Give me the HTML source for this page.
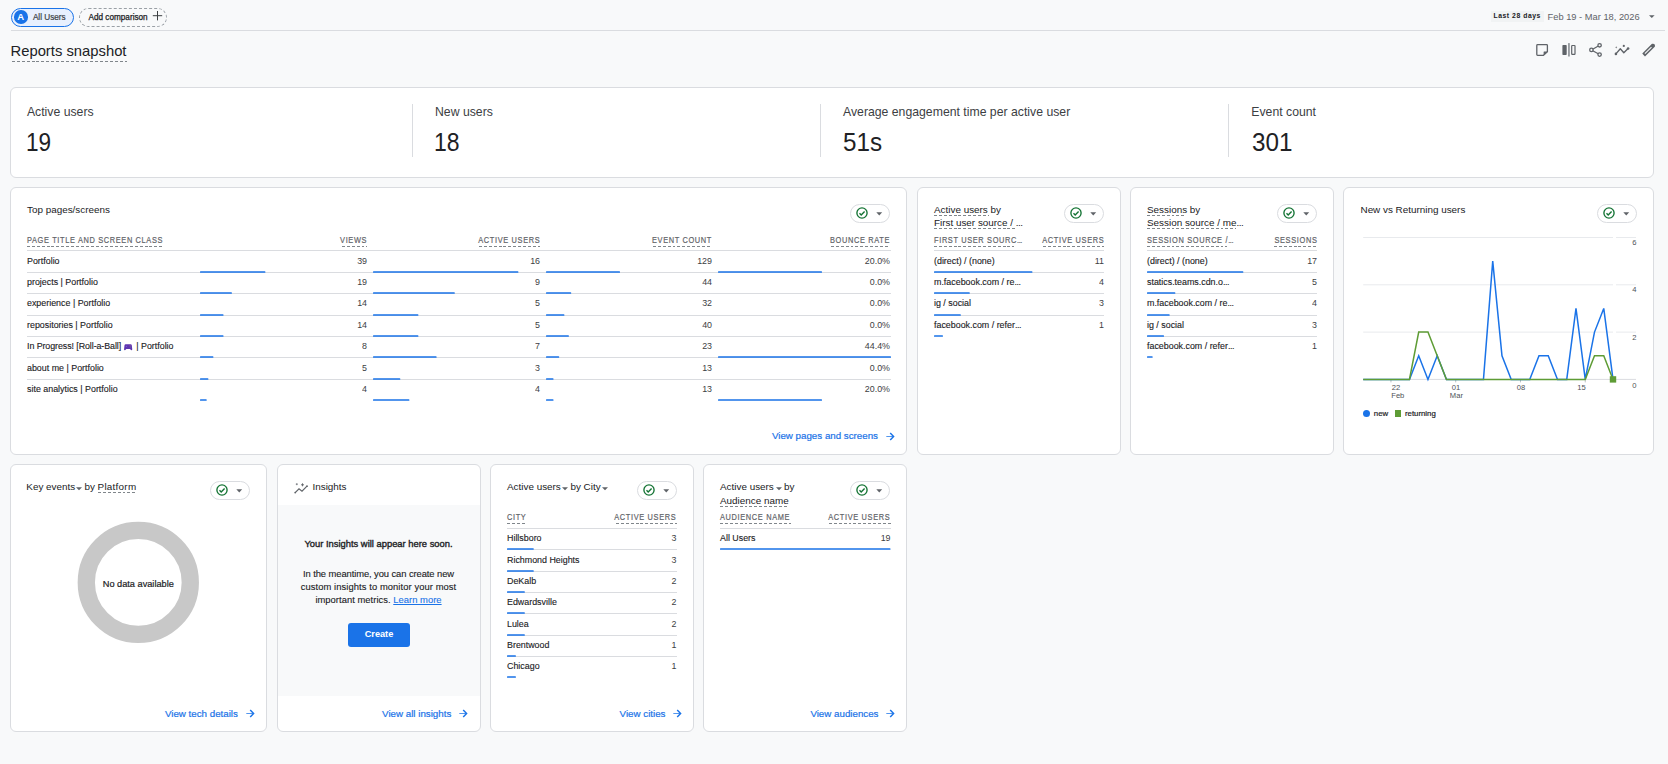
<!DOCTYPE html><html><head><meta charset="utf-8"><style>html,body{margin:0;padding:0;background:#f8f9fa;}body{width:1668px;height:764px;background:#f8f9fa;position:relative;overflow:hidden;font-family:"Liberation Sans", sans-serif;}.t{position:absolute;line-height:0;white-space:nowrap;}.r{position:absolute;}.s{position:absolute;overflow:visible;}.card{position:absolute;box-sizing:border-box;background:#fff;border:1px solid #dadce0;border-radius:6px;}.chip{position:absolute;border:1px solid #dadce0;border-radius:10px;}</style></head><body>
<div class="r" style="left:11px;top:8px;width:60.5px;height:16.5px;border:1px solid #1a73e8;border-radius:10px;background:#e8f0fe;"></div>
<div class="r" style="left:14px;top:10px;width:13.6px;height:13.6px;border-radius:50%;background:#1a73e8;"></div>
<div class="t" style="top:17.00px;font-size:9.5px;color:#fff;font-weight:700;left:20.80px;transform:translateX(-50%);">A</div>
<div class="t" style="top:18.00px;font-size:8.2px;color:#3c4043;left:32.90px;-webkit-text-stroke:0.2px #3c4043;">All Users</div>
<div class="r" style="left:79px;top:8px;width:85.5px;height:16.5px;border:1px dashed #9aa0a6;border-radius:10px;"></div>
<div class="t" style="top:18.00px;font-size:8.2px;color:#202124;left:88.50px;-webkit-text-stroke:0.25px #202124;">Add comparison</div>
<svg class="s" style="left:151.6px;top:9.6px" width="11" height="11" viewBox="0 0 11 11"><path d="M5.5 1 V10.4 M0.8 5.7 H10.2" stroke="#3c4043" stroke-width="1"/></svg>
<div class="r" style="left:11.00px;top:30.00px;width:1654.00px;height:1.00px;background:#dadce0;"></div>
<div class="r" style="left:1490.70px;top:10.70px;width:53.00px;height:11.30px;background:#f1f3f4;"></div>
<div class="t" style="top:16.00px;font-size:6.8px;color:#202124;font-weight:700;letter-spacing:0.55px;left:1493.50px;">Last 28 days</div>
<div class="t" style="top:17.00px;font-size:9.3px;color:#5f6368;left:1547.60px;">Feb 19 - Mar 18, 2026</div>
<svg class="s" style="left:1648.80px;top:15.30px" width="5.6" height="3.8" viewBox="0 0 5.6 3.8"><path d="M0 0.3 L5.6 0.3 L2.8 3.0999999999999996 Z" fill="#5f6368"/></svg>
<div class="t" style="top:51.00px;font-size:14.8px;color:#202124;left:10.50px;">Reports snapshot</div>
<div class="r" style="left:11.50px;top:61.00px;width:115.00px;height:1px;background:repeating-linear-gradient(90deg,#80868b 0 2.9px,transparent 2.9px 4.9px);"></div>
<svg class="s" style="left:1530px;top:40px" width="140" height="20" viewBox="1530 40 140 20"><path d="M1537.6 44.7 H1546.6 Q1547.4 44.7 1547.4 45.5 V51.6 L1543.4 55.4 H1537.6 Q1536.8 55.4 1536.8 54.6 V45.5 Q1536.8 44.7 1537.6 44.7 Z" fill="none" stroke="#5f6368" stroke-width="1.3"/><path d="M1547.6 51.5 H1544.2 Q1543.6 51.5 1543.6 52.1 V55.6 Z" fill="#5f6368"/><rect x="1562.4" y="45" width="4.3" height="9.9" rx="0.7" fill="#5f6368"/><rect x="1568.2" y="43.1" width="1.5" height="13.4" fill="#80868b"/><rect x="1571.7" y="45.5" width="3.3" height="8.9" rx="0.6" fill="none" stroke="#5f6368" stroke-width="1.2"/><path d="M1599.6 45.3 L1591.4 49.9 L1599.6 54.6" fill="none" stroke="#5f6368" stroke-width="1.2"/><circle cx="1599.6" cy="45.3" r="1.7" fill="#f8f9fa" stroke="#5f6368" stroke-width="1.3"/><circle cx="1591.4" cy="49.9" r="1.7" fill="#f8f9fa" stroke="#5f6368" stroke-width="1.3"/><circle cx="1599.6" cy="54.6" r="1.7" fill="#f8f9fa" stroke="#5f6368" stroke-width="1.3"/><path d="M1615.9 53.9 L1620.3 48.8 L1623.8 52.8 L1628.1 48.5" fill="none" stroke="#5f6368" stroke-width="1.35" stroke-linejoin="round"/><circle cx="1615.9" cy="53.9" r="1.3" fill="#5f6368"/><circle cx="1628.1" cy="48.5" r="1.3" fill="#5f6368"/><circle cx="1623.8" cy="45.9" r="1.1" fill="#5f6368"/><path d="M1616.2 46.2 L1616.6 47 L1617.4 47.3 L1616.6 47.6 L1616.2 48.4 L1615.8 47.6 L1615 47.3 L1615.8 47 Z" fill="#5f6368"/><path d="M1643.6 55 L1653.6 45" stroke="#5f6368" stroke-width="3.9" stroke-linecap="butt"/><path d="M1644.9 53.7 L1651.5 47.1" stroke="#f8f9fa" stroke-width="1.1"/><circle cx="1653.3" cy="45.3" r="1.6" fill="#5f6368"/></svg>
<div class="card" style="left:10px;top:87px;width:1644px;height:91px;"></div>
<div class="t" style="top:112.00px;font-size:12.25px;color:#3c4043;left:26.90px;">Active users</div>
<div class="t" style="top:142.00px;font-size:25.5px;color:#202124;left:26.10px;transform:scaleX(0.885);transform-origin:0 0;">19</div>
<div class="t" style="top:112.00px;font-size:12.25px;color:#3c4043;left:435.00px;">New users</div>
<div class="t" style="top:142.00px;font-size:25.5px;color:#202124;left:433.80px;transform:scaleX(0.9);transform-origin:0 0;">18</div>
<div class="t" style="top:112.00px;font-size:12.25px;color:#3c4043;left:843.00px;">Average engagement time per active user</div>
<div class="t" style="top:142.00px;font-size:25.5px;color:#202124;left:842.60px;transform:scaleX(0.95);transform-origin:0 0;">51s</div>
<div class="t" style="top:112.00px;font-size:12.25px;color:#3c4043;left:1251.30px;">Event count</div>
<div class="t" style="top:142.00px;font-size:25.5px;color:#202124;left:1251.50px;transform:scaleX(0.95);transform-origin:0 0;">301</div>
<div class="r" style="left:412.00px;top:104.00px;width:1.00px;height:53.00px;background:#dadce0;"></div>
<div class="r" style="left:820.00px;top:104.00px;width:1.00px;height:53.00px;background:#dadce0;"></div>
<div class="r" style="left:1228.00px;top:104.00px;width:1.00px;height:53.00px;background:#dadce0;"></div>
<div class="card" style="left:10px;top:187px;width:897px;height:268px;"></div>
<div class="card" style="left:917px;top:187px;width:204px;height:268px;"></div>
<div class="card" style="left:1130px;top:187px;width:204px;height:268px;"></div>
<div class="card" style="left:1343px;top:187px;width:311px;height:268px;"></div>
<div class="card" style="left:10px;top:464px;width:257px;height:268px;"></div>
<div class="card" style="left:277px;top:464px;width:204px;height:268px;"></div>
<div class="card" style="left:490px;top:464px;width:204px;height:268px;"></div>
<div class="card" style="left:703px;top:464px;width:204px;height:268px;"></div>
<div class="t" style="top:210.00px;font-size:9.9px;color:#202124;left:27.00px;">Top pages/screens</div>
<div class="chip" style="left:849.70px;top:204.20px;width:38.30px;height:16.50px;"></div>
<svg class="s" style="left:854.60px;top:206.15px" width="14" height="14" viewBox="0 0 14 14"><circle cx="7" cy="7" r="5.1" fill="none" stroke="#137333" stroke-width="1.35"/><path d="M4.5 7.3 L6.2 9 L9.6 5.5" fill="none" stroke="#137333" stroke-width="1.4"/></svg>
<svg class="s" style="left:875.60px;top:211.55px" width="7" height="4" viewBox="0 0 7 4"><path d="M0.3 0.3 L6.2 0.3 L3.25 3.4 Z" fill="#5f6368"/></svg>
<div class="t" style="top:240.00px;font-size:8.5px;color:#5f6368;letter-spacing:0.75px;left:27.00px;-webkit-text-stroke:0.2px #5f6368;transform:scaleX(0.87);transform-origin:0 0;">PAGE TITLE AND SCREEN CLASS</div>
<div class="r" style="left:27.00px;top:246.00px;width:136.50px;height:1px;background:repeating-linear-gradient(90deg,#80868b 0 2.9px,transparent 2.9px 4.9px);"></div>
<div class="t" style="top:240.00px;font-size:8.5px;color:#5f6368;letter-spacing:0.75px;right:1301.00px;-webkit-text-stroke:0.2px #5f6368;transform:scaleX(0.87);transform-origin:100% 0;">VIEWS</div>
<div class="r" style="left:341.50px;top:246.00px;width:25.50px;height:1px;background:repeating-linear-gradient(90deg,#80868b 0 2.9px,transparent 2.9px 4.9px);"></div>
<div class="t" style="top:240.00px;font-size:8.5px;color:#5f6368;letter-spacing:0.75px;right:1128.00px;-webkit-text-stroke:0.2px #5f6368;transform:scaleX(0.87);transform-origin:100% 0;">ACTIVE USERS</div>
<div class="r" style="left:479.00px;top:246.00px;width:61.00px;height:1px;background:repeating-linear-gradient(90deg,#80868b 0 2.9px,transparent 2.9px 4.9px);"></div>
<div class="t" style="top:240.00px;font-size:8.5px;color:#5f6368;letter-spacing:0.75px;right:956.00px;-webkit-text-stroke:0.2px #5f6368;transform:scaleX(0.87);transform-origin:100% 0;">EVENT COUNT</div>
<div class="r" style="left:652.50px;top:246.00px;width:59.50px;height:1px;background:repeating-linear-gradient(90deg,#80868b 0 2.9px,transparent 2.9px 4.9px);"></div>
<div class="t" style="top:240.00px;font-size:8.5px;color:#5f6368;letter-spacing:0.75px;right:778.00px;-webkit-text-stroke:0.2px #5f6368;transform:scaleX(0.87);transform-origin:100% 0;">BOUNCE RATE</div>
<div class="r" style="left:831.00px;top:246.00px;width:59.00px;height:1px;background:repeating-linear-gradient(90deg,#80868b 0 2.9px,transparent 2.9px 4.9px);"></div>
<div class="r" style="left:27.00px;top:250.00px;width:864.00px;height:1.00px;background:#dadce0;"></div>
<div class="r" style="left:27.00px;top:272.00px;width:864.00px;height:1.00px;background:#dadce0;"></div>
<div class="r" style="left:27.00px;top:293.00px;width:864.00px;height:1.00px;background:#dadce0;"></div>
<div class="r" style="left:27.00px;top:315.00px;width:864.00px;height:1.00px;background:#dadce0;"></div>
<div class="r" style="left:27.00px;top:336.00px;width:864.00px;height:1.00px;background:#dadce0;"></div>
<div class="r" style="left:27.00px;top:357.00px;width:864.00px;height:1.00px;background:#dadce0;"></div>
<div class="r" style="left:27.00px;top:379.00px;width:864.00px;height:1.00px;background:#dadce0;"></div>
<div class="t" style="top:261.00px;font-size:8.9px;color:#202124;left:27.00px;-webkit-text-stroke:0.12px #202124;">Portfolio</div>
<div class="t" style="top:261.00px;font-size:8.9px;color:#3c4043;right:1301.00px;transform:scaleY(1.12);transform-origin:0 100%;">39</div>
<div class="t" style="top:261.00px;font-size:8.9px;color:#3c4043;right:1128.00px;transform:scaleY(1.12);transform-origin:0 100%;">16</div>
<div class="t" style="top:261.00px;font-size:8.9px;color:#3c4043;right:956.00px;transform:scaleY(1.12);transform-origin:0 100%;">129</div>
<div class="t" style="top:261.00px;font-size:8.9px;color:#3c4043;right:778.00px;transform:scaleY(1.12);transform-origin:0 100%;">20.0%</div>
<div class="t" style="top:282.00px;font-size:8.9px;color:#202124;left:27.00px;-webkit-text-stroke:0.12px #202124;">projects | Portfolio</div>
<div class="t" style="top:282.00px;font-size:8.9px;color:#3c4043;right:1301.00px;transform:scaleY(1.12);transform-origin:0 100%;">19</div>
<div class="t" style="top:282.00px;font-size:8.9px;color:#3c4043;right:1128.00px;transform:scaleY(1.12);transform-origin:0 100%;">9</div>
<div class="t" style="top:282.00px;font-size:8.9px;color:#3c4043;right:956.00px;transform:scaleY(1.12);transform-origin:0 100%;">44</div>
<div class="t" style="top:282.00px;font-size:8.9px;color:#3c4043;right:778.00px;transform:scaleY(1.12);transform-origin:0 100%;">0.0%</div>
<div class="t" style="top:303.00px;font-size:8.9px;color:#202124;left:27.00px;-webkit-text-stroke:0.12px #202124;">experience | Portfolio</div>
<div class="t" style="top:303.00px;font-size:8.9px;color:#3c4043;right:1301.00px;transform:scaleY(1.12);transform-origin:0 100%;">14</div>
<div class="t" style="top:303.00px;font-size:8.9px;color:#3c4043;right:1128.00px;transform:scaleY(1.12);transform-origin:0 100%;">5</div>
<div class="t" style="top:303.00px;font-size:8.9px;color:#3c4043;right:956.00px;transform:scaleY(1.12);transform-origin:0 100%;">32</div>
<div class="t" style="top:303.00px;font-size:8.9px;color:#3c4043;right:778.00px;transform:scaleY(1.12);transform-origin:0 100%;">0.0%</div>
<div class="t" style="top:325.00px;font-size:8.9px;color:#202124;left:27.00px;-webkit-text-stroke:0.12px #202124;">repositories | Portfolio</div>
<div class="t" style="top:325.00px;font-size:8.9px;color:#3c4043;right:1301.00px;transform:scaleY(1.12);transform-origin:0 100%;">14</div>
<div class="t" style="top:325.00px;font-size:8.9px;color:#3c4043;right:1128.00px;transform:scaleY(1.12);transform-origin:0 100%;">5</div>
<div class="t" style="top:325.00px;font-size:8.9px;color:#3c4043;right:956.00px;transform:scaleY(1.12);transform-origin:0 100%;">40</div>
<div class="t" style="top:325.00px;font-size:8.9px;color:#3c4043;right:778.00px;transform:scaleY(1.12);transform-origin:0 100%;">0.0%</div>
<div class="t" style="top:346.00px;font-size:8.9px;color:#202124;letter-spacing:-0.08px;left:27.00px;-webkit-text-stroke:0.12px #202124;">In Progress! [Roll-a-Ball]</div>
<svg class="s" style="left:123.9px;top:343.8px" width="8.3" height="6.3" viewBox="0 0 8.3 6.3"><path d="M1.6 0.3 H6.7 Q7.6 0.3 7.8 1.3 L8.25 5.2 Q8.3 6.2 7.4 6.2 Q6.9 6.2 6.5 5.6 L5.9 4.9 H2.4 L1.8 5.6 Q1.4 6.2 0.9 6.2 Q0 6.2 0.05 5.2 L0.5 1.3 Q0.7 0.3 1.6 0.3 Z" fill="#5e35b1"/><circle cx="2.3" cy="2.2" r="0.5" fill="#8c7ae6"/><circle cx="6" cy="1.8" r="0.45" fill="#e57373"/><circle cx="6.2" cy="3" r="0.45" fill="#66bb6a"/></svg>
<div class="t" style="top:346.00px;font-size:8.9px;color:#202124;left:136.20px;-webkit-text-stroke:0.12px #202124;">| Portfolio</div>
<div class="t" style="top:346.00px;font-size:8.9px;color:#3c4043;right:1301.00px;transform:scaleY(1.12);transform-origin:0 100%;">8</div>
<div class="t" style="top:346.00px;font-size:8.9px;color:#3c4043;right:1128.00px;transform:scaleY(1.12);transform-origin:0 100%;">7</div>
<div class="t" style="top:346.00px;font-size:8.9px;color:#3c4043;right:956.00px;transform:scaleY(1.12);transform-origin:0 100%;">23</div>
<div class="t" style="top:346.00px;font-size:8.9px;color:#3c4043;right:778.00px;transform:scaleY(1.12);transform-origin:0 100%;">44.4%</div>
<div class="t" style="top:368.00px;font-size:8.9px;color:#202124;left:27.00px;-webkit-text-stroke:0.12px #202124;">about me | Portfolio</div>
<div class="t" style="top:368.00px;font-size:8.9px;color:#3c4043;right:1301.00px;transform:scaleY(1.12);transform-origin:0 100%;">5</div>
<div class="t" style="top:368.00px;font-size:8.9px;color:#3c4043;right:1128.00px;transform:scaleY(1.12);transform-origin:0 100%;">3</div>
<div class="t" style="top:368.00px;font-size:8.9px;color:#3c4043;right:956.00px;transform:scaleY(1.12);transform-origin:0 100%;">13</div>
<div class="t" style="top:368.00px;font-size:8.9px;color:#3c4043;right:778.00px;transform:scaleY(1.12);transform-origin:0 100%;">0.0%</div>
<div class="t" style="top:389.00px;font-size:8.9px;color:#202124;left:27.00px;-webkit-text-stroke:0.12px #202124;">site analytics | Portfolio</div>
<div class="t" style="top:389.00px;font-size:8.9px;color:#3c4043;right:1301.00px;transform:scaleY(1.12);transform-origin:0 100%;">4</div>
<div class="t" style="top:389.00px;font-size:8.9px;color:#3c4043;right:1128.00px;transform:scaleY(1.12);transform-origin:0 100%;">4</div>
<div class="t" style="top:389.00px;font-size:8.9px;color:#3c4043;right:956.00px;transform:scaleY(1.12);transform-origin:0 100%;">13</div>
<div class="t" style="top:389.00px;font-size:8.9px;color:#3c4043;right:778.00px;transform:scaleY(1.12);transform-origin:0 100%;">20.0%</div>
<div class="t" style="top:436.00px;font-size:9.75px;color:#1a73e8;right:790.00px;-webkit-text-stroke:0.2px #1a73e8;">View pages and screens</div>
<svg class="s" style="left:885.60px;top:432.30px" width="9" height="9" viewBox="0 0 9 9"><path d="M0.3 4.5 H7.2" fill="none" stroke="#1a73e8" stroke-width="1.0" stroke-opacity="0.75"/><path d="M4.2 1 L7.6 4.5 L4.2 8" fill="none" stroke="#1a73e8" stroke-width="1.45"/></svg>
<div class="t" style="top:210.00px;font-size:9.9px;color:#202124;left:934.00px;">Active users by</div>
<div class="r" style="left:934.00px;top:215.00px;width:55.00px;height:1px;background:repeating-linear-gradient(90deg,#80868b 0 2.9px,transparent 2.9px 4.9px);"></div>
<div class="t" style="top:223.00px;font-size:9.9px;color:#202124;left:934.00px;">First user source / <span style="letter-spacing:-0.45px">...</span></div>
<div class="r" style="left:934.00px;top:228.00px;width:82.00px;height:1px;background:repeating-linear-gradient(90deg,#80868b 0 2.9px,transparent 2.9px 4.9px);"></div>
<div class="chip" style="left:1063.70px;top:204.20px;width:38.30px;height:16.50px;"></div>
<svg class="s" style="left:1068.60px;top:206.15px" width="14" height="14" viewBox="0 0 14 14"><circle cx="7" cy="7" r="5.1" fill="none" stroke="#137333" stroke-width="1.35"/><path d="M4.5 7.3 L6.2 9 L9.6 5.5" fill="none" stroke="#137333" stroke-width="1.4"/></svg>
<svg class="s" style="left:1089.60px;top:211.55px" width="7" height="4" viewBox="0 0 7 4"><path d="M0.3 0.3 L6.2 0.3 L3.25 3.4 Z" fill="#5f6368"/></svg>
<div class="t" style="top:240.00px;font-size:8.5px;color:#5f6368;letter-spacing:0.75px;left:934.00px;-webkit-text-stroke:0.2px #5f6368;transform:scaleX(0.87);transform-origin:0 0;">FIRST USER SOURC<span style="letter-spacing:-0.45px">...</span></div>
<div class="r" style="left:934.00px;top:246.00px;width:80.00px;height:1px;background:repeating-linear-gradient(90deg,#80868b 0 2.9px,transparent 2.9px 4.9px);"></div>
<div class="t" style="top:240.00px;font-size:8.5px;color:#5f6368;letter-spacing:0.75px;right:564.00px;-webkit-text-stroke:0.2px #5f6368;transform:scaleX(0.87);transform-origin:100% 0;">ACTIVE USERS</div>
<div class="r" style="left:1042.70px;top:246.00px;width:61.30px;height:1px;background:repeating-linear-gradient(90deg,#80868b 0 2.9px,transparent 2.9px 4.9px);"></div>
<div class="r" style="left:934.00px;top:250.00px;width:170.00px;height:1.00px;background:#dadce0;"></div>
<div class="r" style="left:934.00px;top:272.00px;width:170.00px;height:1.00px;background:#dadce0;"></div>
<div class="r" style="left:934.00px;top:293.00px;width:170.00px;height:1.00px;background:#dadce0;"></div>
<div class="r" style="left:934.00px;top:315.00px;width:170.00px;height:1.00px;background:#dadce0;"></div>
<div class="t" style="top:261.00px;font-size:8.9px;color:#202124;left:934.00px;-webkit-text-stroke:0.12px #202124;">(direct) / (none)</div>
<div class="t" style="top:261.00px;font-size:8.9px;color:#3c4043;right:564.00px;transform:scaleY(1.12);transform-origin:0 100%;">11</div>
<div class="t" style="top:282.00px;font-size:8.9px;color:#202124;left:934.00px;-webkit-text-stroke:0.12px #202124;">m.facebook.com / re<span style="letter-spacing:-0.45px">...</span></div>
<div class="t" style="top:282.00px;font-size:8.9px;color:#3c4043;right:564.00px;transform:scaleY(1.12);transform-origin:0 100%;">4</div>
<div class="t" style="top:303.00px;font-size:8.9px;color:#202124;left:934.00px;-webkit-text-stroke:0.12px #202124;">ig / social</div>
<div class="t" style="top:303.00px;font-size:8.9px;color:#3c4043;right:564.00px;transform:scaleY(1.12);transform-origin:0 100%;">3</div>
<div class="t" style="top:325.00px;font-size:8.9px;color:#202124;left:934.00px;-webkit-text-stroke:0.12px #202124;">facebook.com / refer<span style="letter-spacing:-0.45px">...</span></div>
<div class="t" style="top:325.00px;font-size:8.9px;color:#3c4043;right:564.00px;transform:scaleY(1.12);transform-origin:0 100%;">1</div>
<div class="t" style="top:210.00px;font-size:9.9px;color:#202124;left:1147.00px;">Sessions by</div>
<div class="r" style="left:1147.00px;top:215.00px;width:38.00px;height:1px;background:repeating-linear-gradient(90deg,#80868b 0 2.9px,transparent 2.9px 4.9px);"></div>
<div class="t" style="top:223.00px;font-size:9.9px;color:#202124;left:1147.00px;">Session source / me<span style="letter-spacing:-0.45px">...</span></div>
<div class="r" style="left:1147.00px;top:228.00px;width:89.00px;height:1px;background:repeating-linear-gradient(90deg,#80868b 0 2.9px,transparent 2.9px 4.9px);"></div>
<div class="chip" style="left:1276.70px;top:204.20px;width:38.30px;height:16.50px;"></div>
<svg class="s" style="left:1281.60px;top:206.15px" width="14" height="14" viewBox="0 0 14 14"><circle cx="7" cy="7" r="5.1" fill="none" stroke="#137333" stroke-width="1.35"/><path d="M4.5 7.3 L6.2 9 L9.6 5.5" fill="none" stroke="#137333" stroke-width="1.4"/></svg>
<svg class="s" style="left:1302.60px;top:211.55px" width="7" height="4" viewBox="0 0 7 4"><path d="M0.3 0.3 L6.2 0.3 L3.25 3.4 Z" fill="#5f6368"/></svg>
<div class="t" style="top:240.00px;font-size:8.5px;color:#5f6368;letter-spacing:0.75px;left:1147.00px;-webkit-text-stroke:0.2px #5f6368;transform:scaleX(0.87);transform-origin:0 0;">SESSION SOURCE /<span style="letter-spacing:-0.45px">...</span></div>
<div class="r" style="left:1147.00px;top:246.00px;width:80.00px;height:1px;background:repeating-linear-gradient(90deg,#80868b 0 2.9px,transparent 2.9px 4.9px);"></div>
<div class="t" style="top:240.00px;font-size:8.5px;color:#5f6368;letter-spacing:0.75px;right:351.00px;-webkit-text-stroke:0.2px #5f6368;transform:scaleX(0.87);transform-origin:100% 0;">SESSIONS</div>
<div class="r" style="left:1274.00px;top:246.00px;width:43.00px;height:1px;background:repeating-linear-gradient(90deg,#80868b 0 2.9px,transparent 2.9px 4.9px);"></div>
<div class="r" style="left:1147.00px;top:250.00px;width:170.00px;height:1.00px;background:#dadce0;"></div>
<div class="r" style="left:1147.00px;top:272.00px;width:170.00px;height:1.00px;background:#dadce0;"></div>
<div class="r" style="left:1147.00px;top:293.00px;width:170.00px;height:1.00px;background:#dadce0;"></div>
<div class="r" style="left:1147.00px;top:315.00px;width:170.00px;height:1.00px;background:#dadce0;"></div>
<div class="r" style="left:1147.00px;top:336.00px;width:170.00px;height:1.00px;background:#dadce0;"></div>
<div class="t" style="top:261.00px;font-size:8.9px;color:#202124;left:1147.00px;-webkit-text-stroke:0.12px #202124;">(direct) / (none)</div>
<div class="t" style="top:261.00px;font-size:8.9px;color:#3c4043;right:351.00px;transform:scaleY(1.12);transform-origin:0 100%;">17</div>
<div class="t" style="top:282.00px;font-size:8.9px;color:#202124;left:1147.00px;-webkit-text-stroke:0.12px #202124;">statics.teams.cdn.o<span style="letter-spacing:-0.45px">...</span></div>
<div class="t" style="top:282.00px;font-size:8.9px;color:#3c4043;right:351.00px;transform:scaleY(1.12);transform-origin:0 100%;">5</div>
<div class="t" style="top:303.00px;font-size:8.9px;color:#202124;left:1147.00px;-webkit-text-stroke:0.12px #202124;">m.facebook.com / re<span style="letter-spacing:-0.45px">...</span></div>
<div class="t" style="top:303.00px;font-size:8.9px;color:#3c4043;right:351.00px;transform:scaleY(1.12);transform-origin:0 100%;">4</div>
<div class="t" style="top:325.00px;font-size:8.9px;color:#202124;left:1147.00px;-webkit-text-stroke:0.12px #202124;">ig / social</div>
<div class="t" style="top:325.00px;font-size:8.9px;color:#3c4043;right:351.00px;transform:scaleY(1.12);transform-origin:0 100%;">3</div>
<div class="t" style="top:346.00px;font-size:8.9px;color:#202124;left:1147.00px;-webkit-text-stroke:0.12px #202124;">facebook.com / refer<span style="letter-spacing:-0.45px">...</span></div>
<div class="t" style="top:346.00px;font-size:8.9px;color:#3c4043;right:351.00px;transform:scaleY(1.12);transform-origin:0 100%;">1</div>
<div class="t" style="top:210.00px;font-size:9.9px;color:#202124;left:1360.50px;">New vs Returning users</div>
<div class="chip" style="left:1597.00px;top:204.20px;width:38.30px;height:16.50px;"></div>
<svg class="s" style="left:1601.90px;top:206.15px" width="14" height="14" viewBox="0 0 14 14"><circle cx="7" cy="7" r="5.1" fill="none" stroke="#137333" stroke-width="1.35"/><path d="M4.5 7.3 L6.2 9 L9.6 5.5" fill="none" stroke="#137333" stroke-width="1.4"/></svg>
<svg class="s" style="left:1622.90px;top:211.55px" width="7" height="4" viewBox="0 0 7 4"><path d="M0.3 0.3 L6.2 0.3 L3.25 3.4 Z" fill="#5f6368"/></svg>
<svg class="s" style="left:0;top:0" width="1668" height="764" viewBox="0 0 1668 764"><path d="M1363.2 237.50 H1613 M1616 237.50 H1636" stroke="#e8eaed" stroke-width="1"/><path d="M1363.2 284.80 H1613 M1616 284.80 H1636" stroke="#e8eaed" stroke-width="1"/><path d="M1363.2 332.10 H1613 M1616 332.10 H1636" stroke="#e8eaed" stroke-width="1"/><path d="M1363.2 379.40 H1636" stroke="#dadce0" stroke-width="1"/><path d="M1390.96 379.4 V382.4" stroke="#bdc1c6" stroke-width="1"/><path d="M1455.72 379.4 V382.4" stroke="#bdc1c6" stroke-width="1"/><path d="M1520.48 379.4 V382.4" stroke="#bdc1c6" stroke-width="1"/><path d="M1585.24 379.4 V382.4" stroke="#bdc1c6" stroke-width="1"/><polyline points="1363.20,379.40 1372.45,379.40 1381.70,379.40 1390.96,379.40 1400.21,379.40 1409.46,379.40 1418.71,355.75 1427.96,379.40 1437.21,355.75 1446.47,379.40 1455.72,379.40 1464.97,379.40 1474.22,379.40 1483.47,379.40 1492.73,261.15 1501.98,355.75 1511.23,379.40 1520.48,379.40 1529.73,379.40 1538.99,355.75 1548.24,355.75 1557.49,379.40 1566.74,379.40 1575.99,308.45 1585.24,379.40 1594.50,332.10 1603.75,308.45 1613.00,379.40" fill="none" stroke="#1a73e8" stroke-width="1.5" stroke-linejoin="miter"/><polyline points="1363.20,379.40 1372.45,379.40 1381.70,379.40 1390.96,379.40 1400.21,379.40 1409.46,379.40 1418.71,332.10 1427.96,332.10 1437.21,355.75 1446.47,379.40 1455.72,379.40 1464.97,379.40 1474.22,379.40 1483.47,379.40 1492.73,379.40 1501.98,379.40 1511.23,379.40 1520.48,379.40 1529.73,379.40 1538.99,379.40 1548.24,379.40 1557.49,379.40 1566.74,379.40 1575.99,379.40 1585.24,379.40 1594.50,355.75 1603.75,355.75 1613.00,379.40" fill="none" stroke="#5e9c35" stroke-width="1.5" stroke-linejoin="miter"/><rect x="1609.8" y="376.2" width="6.4" height="6.4" fill="#5e9c35"/></svg>
<div class="t" style="top:243.00px;font-size:7.6px;color:#4d5156;left:1634.30px;transform:translateX(-50%);">6</div>
<div class="t" style="top:290.00px;font-size:7.6px;color:#4d5156;left:1634.30px;transform:translateX(-50%);">4</div>
<div class="t" style="top:338.00px;font-size:7.6px;color:#4d5156;left:1634.30px;transform:translateX(-50%);">2</div>
<div class="t" style="top:386.00px;font-size:7.6px;color:#4d5156;left:1634.30px;transform:translateX(-50%);">0</div>
<div class="t" style="top:388.00px;font-size:7.6px;color:#4d5156;left:1396.00px;transform:translateX(-50%);">22</div>
<div class="t" style="top:396.00px;font-size:7.6px;color:#4d5156;left:1397.80px;transform:translateX(-50%);">Feb</div>
<div class="t" style="top:388.00px;font-size:7.6px;color:#4d5156;left:1456.00px;transform:translateX(-50%);">01</div>
<div class="t" style="top:396.00px;font-size:7.6px;color:#4d5156;left:1456.40px;transform:translateX(-50%);">Mar</div>
<div class="t" style="top:388.00px;font-size:7.6px;color:#4d5156;left:1521.00px;transform:translateX(-50%);">08</div>
<div class="t" style="top:388.00px;font-size:7.6px;color:#4d5156;left:1581.40px;transform:translateX(-50%);">15</div>
<div class="r" style="left:1363px;top:409.8px;width:7px;height:7px;border-radius:50%;background:#1a73e8"></div>
<div class="t" style="top:414.00px;font-size:7.8px;color:#202124;left:1373.80px;-webkit-text-stroke:0.2px #202124;">new</div>
<div class="r" style="left:1394.60px;top:410.30px;width:6.60px;height:6.60px;background:#5e9c35;"></div>
<div class="t" style="top:414.00px;font-size:7.8px;color:#202124;left:1405.00px;-webkit-text-stroke:0.2px #202124;">returning</div>
<div class="t" style="top:487.00px;font-size:9.9px;color:#202124;left:26.30px;">Key events</div>
<svg class="s" style="left:75.80px;top:487.00px" width="6" height="4.0" viewBox="0 0 6 4.0"><path d="M0 0.3 L6 0.3 L3.0 3.3 Z" fill="#5f6368"/></svg>
<div class="t" style="top:487.00px;font-size:9.9px;color:#202124;left:84.60px;">by</div>
<div class="t" style="top:487.00px;font-size:9.9px;color:#202124;letter-spacing:0.25px;left:97.60px;">Platform</div>
<div class="r" style="left:98.00px;top:492.00px;width:38.00px;height:1px;background:repeating-linear-gradient(90deg,#80868b 0 2.9px,transparent 2.9px 4.9px);"></div>
<div class="chip" style="left:210.20px;top:481.25px;width:38.30px;height:16.50px;"></div>
<svg class="s" style="left:215.10px;top:483.20px" width="14" height="14" viewBox="0 0 14 14"><circle cx="7" cy="7" r="5.1" fill="none" stroke="#137333" stroke-width="1.35"/><path d="M4.5 7.3 L6.2 9 L9.6 5.5" fill="none" stroke="#137333" stroke-width="1.4"/></svg>
<svg class="s" style="left:236.10px;top:488.60px" width="7" height="4" viewBox="0 0 7 4"><path d="M0.3 0.3 L6.2 0.3 L3.25 3.4 Z" fill="#5f6368"/></svg>
<svg class="s" style="left:70px;top:514px" width="137" height="137" viewBox="0 0 137 137"><circle cx="68.3" cy="68.4" r="52" fill="none" stroke="#c8c8c8" stroke-width="17.3"/></svg>
<div class="t" style="top:584.00px;font-size:9.2px;color:#202124;left:138.30px;transform:translateX(-50%);-webkit-text-stroke:0.2px #202124;">No data available</div>
<div class="t" style="top:714.00px;font-size:9.75px;color:#1a73e8;right:1430.10px;-webkit-text-stroke:0.2px #1a73e8;">View tech details</div>
<svg class="s" style="left:245.70px;top:709.20px" width="9" height="9" viewBox="0 0 9 9"><path d="M0.3 4.5 H7.2" fill="none" stroke="#1a73e8" stroke-width="1.0" stroke-opacity="0.75"/><path d="M4.2 1 L7.6 4.5 L4.2 8" fill="none" stroke="#1a73e8" stroke-width="1.45"/></svg>
<div class="r" style="left:278.00px;top:504.60px;width:202.00px;height:191.70px;background:#f8f9fa;"></div>
<svg class="s" style="left:293.5px;top:482.5px" width="15" height="11" viewBox="0 0 15 11"><path d="M1.2 9.6 L5 5.8 L8 8.2 L13 3.2" fill="none" stroke="#5f6368" stroke-width="1.2"/><circle cx="1.2" cy="9.6" r="0.9" fill="#5f6368"/><circle cx="13" cy="3.2" r="0.9" fill="#5f6368"/><path d="M8.5 0.3 V3.3 M7 1.8 H10" stroke="#5f6368" stroke-width="0.9"/><path d="M1.8 1.2 H3.8 M2.8 0.2 V2.2" stroke="#5f6368" stroke-width="0.7"/></svg>
<div class="t" style="top:487.00px;font-size:9.9px;color:#202124;left:312.50px;">Insights</div>
<div class="t" style="top:544.00px;font-size:9.4px;color:#202124;left:378.50px;transform:translateX(-50%);-webkit-text-stroke:0.35px #202124;">Your Insights will appear here soon.</div>
<div class="t" style="top:574.00px;font-size:9.4px;color:#202124;letter-spacing:-0.08px;left:378.50px;transform:translateX(-50%);-webkit-text-stroke:0.12px #202124;">In the meantime, you can create new</div>
<div class="t" style="top:587.00px;font-size:9.4px;color:#202124;letter-spacing:0.08px;left:378.50px;transform:translateX(-50%);-webkit-text-stroke:0.12px #202124;">custom insights to monitor your most</div>
<div class="t" style="top:600.00px;font-size:9.4px;color:#202124;letter-spacing:0.04px;left:378.50px;transform:translateX(-50%);-webkit-text-stroke:0.12px #202124;">important metrics. <span style="color:#1a73e8;-webkit-text-stroke:0.12px #1a73e8;text-decoration:underline;text-decoration-color:#1a73e8;text-underline-offset:1.2px">Learn more</span></div>
<div class="r" style="left:348.1px;top:623.3px;width:62px;height:23.6px;background:#1a73e8;border-radius:3px;"></div>
<div class="t" style="top:634.00px;font-size:9.2px;color:#fff;font-weight:700;left:379.00px;transform:translateX(-50%);">Create</div>
<div class="t" style="top:714.00px;font-size:9.75px;color:#1a73e8;right:1216.70px;-webkit-text-stroke:0.2px #1a73e8;">View all insights</div>
<svg class="s" style="left:459.30px;top:709.20px" width="9" height="9" viewBox="0 0 9 9"><path d="M0.3 4.5 H7.2" fill="none" stroke="#1a73e8" stroke-width="1.0" stroke-opacity="0.75"/><path d="M4.2 1 L7.6 4.5 L4.2 8" fill="none" stroke="#1a73e8" stroke-width="1.45"/></svg>
<div class="t" style="top:487.00px;font-size:9.9px;color:#202124;left:507.00px;">Active users</div>
<svg class="s" style="left:562.00px;top:487.00px" width="6" height="4.0" viewBox="0 0 6 4.0"><path d="M0 0.3 L6 0.3 L3.0 3.3 Z" fill="#5f6368"/></svg>
<div class="t" style="top:487.00px;font-size:9.9px;color:#202124;left:570.40px;">by City</div>
<svg class="s" style="left:602.00px;top:487.00px" width="6" height="4.0" viewBox="0 0 6 4.0"><path d="M0 0.3 L6 0.3 L3.0 3.3 Z" fill="#5f6368"/></svg>
<div class="chip" style="left:636.70px;top:481.25px;width:38.30px;height:16.50px;"></div>
<svg class="s" style="left:641.60px;top:483.20px" width="14" height="14" viewBox="0 0 14 14"><circle cx="7" cy="7" r="5.1" fill="none" stroke="#137333" stroke-width="1.35"/><path d="M4.5 7.3 L6.2 9 L9.6 5.5" fill="none" stroke="#137333" stroke-width="1.4"/></svg>
<svg class="s" style="left:662.60px;top:488.60px" width="7" height="4" viewBox="0 0 7 4"><path d="M0.3 0.3 L6.2 0.3 L3.25 3.4 Z" fill="#5f6368"/></svg>
<div class="t" style="top:517.00px;font-size:8.5px;color:#5f6368;letter-spacing:0.75px;left:507.00px;-webkit-text-stroke:0.2px #5f6368;transform:scaleX(0.87);transform-origin:0 0;">CITY</div>
<div class="r" style="left:507.00px;top:523.00px;width:19.00px;height:1px;background:repeating-linear-gradient(90deg,#80868b 0 2.9px,transparent 2.9px 4.9px);"></div>
<div class="t" style="top:517.00px;font-size:8.5px;color:#5f6368;letter-spacing:0.75px;right:991.50px;-webkit-text-stroke:0.2px #5f6368;transform:scaleX(0.87);transform-origin:100% 0;">ACTIVE USERS</div>
<div class="r" style="left:615.50px;top:523.00px;width:61.00px;height:1px;background:repeating-linear-gradient(90deg,#80868b 0 2.9px,transparent 2.9px 4.9px);"></div>
<div class="r" style="left:507.00px;top:528.00px;width:169.50px;height:1.00px;background:#dadce0;"></div>
<div class="r" style="left:507.00px;top:549.00px;width:169.50px;height:1.00px;background:#dadce0;"></div>
<div class="r" style="left:507.00px;top:571.00px;width:169.50px;height:1.00px;background:#dadce0;"></div>
<div class="r" style="left:507.00px;top:592.00px;width:169.50px;height:1.00px;background:#dadce0;"></div>
<div class="r" style="left:507.00px;top:613.00px;width:169.50px;height:1.00px;background:#dadce0;"></div>
<div class="r" style="left:507.00px;top:635.00px;width:169.50px;height:1.00px;background:#dadce0;"></div>
<div class="r" style="left:507.00px;top:656.00px;width:169.50px;height:1.00px;background:#dadce0;"></div>
<div class="t" style="top:538.00px;font-size:8.9px;color:#202124;left:507.00px;-webkit-text-stroke:0.12px #202124;">Hillsboro</div>
<div class="t" style="top:538.00px;font-size:8.9px;color:#3c4043;right:991.50px;transform:scaleY(1.12);transform-origin:0 100%;">3</div>
<div class="t" style="top:560.00px;font-size:8.9px;color:#202124;left:507.00px;-webkit-text-stroke:0.12px #202124;">Richmond Heights</div>
<div class="t" style="top:560.00px;font-size:8.9px;color:#3c4043;right:991.50px;transform:scaleY(1.12);transform-origin:0 100%;">3</div>
<div class="t" style="top:581.00px;font-size:8.9px;color:#202124;left:507.00px;-webkit-text-stroke:0.12px #202124;">DeKalb</div>
<div class="t" style="top:581.00px;font-size:8.9px;color:#3c4043;right:991.50px;transform:scaleY(1.12);transform-origin:0 100%;">2</div>
<div class="t" style="top:602.00px;font-size:8.9px;color:#202124;left:507.00px;-webkit-text-stroke:0.12px #202124;">Edwardsville</div>
<div class="t" style="top:602.00px;font-size:8.9px;color:#3c4043;right:991.50px;transform:scaleY(1.12);transform-origin:0 100%;">2</div>
<div class="t" style="top:624.00px;font-size:8.9px;color:#202124;left:507.00px;-webkit-text-stroke:0.12px #202124;">Lulea</div>
<div class="t" style="top:624.00px;font-size:8.9px;color:#3c4043;right:991.50px;transform:scaleY(1.12);transform-origin:0 100%;">2</div>
<div class="t" style="top:645.00px;font-size:8.9px;color:#202124;left:507.00px;-webkit-text-stroke:0.12px #202124;">Brentwood</div>
<div class="t" style="top:645.00px;font-size:8.9px;color:#3c4043;right:991.50px;transform:scaleY(1.12);transform-origin:0 100%;">1</div>
<div class="t" style="top:666.00px;font-size:8.9px;color:#202124;left:507.00px;-webkit-text-stroke:0.12px #202124;">Chicago</div>
<div class="t" style="top:666.00px;font-size:8.9px;color:#3c4043;right:991.50px;transform:scaleY(1.12);transform-origin:0 100%;">1</div>
<div class="t" style="top:714.00px;font-size:9.75px;color:#1a73e8;right:1002.50px;-webkit-text-stroke:0.2px #1a73e8;">View cities</div>
<svg class="s" style="left:672.70px;top:709.20px" width="9" height="9" viewBox="0 0 9 9"><path d="M0.3 4.5 H7.2" fill="none" stroke="#1a73e8" stroke-width="1.0" stroke-opacity="0.75"/><path d="M4.2 1 L7.6 4.5 L4.2 8" fill="none" stroke="#1a73e8" stroke-width="1.45"/></svg>
<div class="t" style="top:487.00px;font-size:9.9px;color:#202124;left:720.00px;">Active users</div>
<svg class="s" style="left:776.00px;top:487.00px" width="6" height="4.0" viewBox="0 0 6 4.0"><path d="M0 0.3 L6 0.3 L3.0 3.3 Z" fill="#5f6368"/></svg>
<div class="t" style="top:487.00px;font-size:9.9px;color:#202124;left:784.00px;">by</div>
<div class="t" style="top:501.00px;font-size:9.9px;color:#202124;left:720.00px;">Audience name</div>
<div class="r" style="left:720.00px;top:506.00px;width:69.00px;height:1px;background:repeating-linear-gradient(90deg,#80868b 0 2.9px,transparent 2.9px 4.9px);"></div>
<div class="chip" style="left:849.70px;top:481.25px;width:38.30px;height:16.50px;"></div>
<svg class="s" style="left:854.60px;top:483.20px" width="14" height="14" viewBox="0 0 14 14"><circle cx="7" cy="7" r="5.1" fill="none" stroke="#137333" stroke-width="1.35"/><path d="M4.5 7.3 L6.2 9 L9.6 5.5" fill="none" stroke="#137333" stroke-width="1.4"/></svg>
<svg class="s" style="left:875.60px;top:488.60px" width="7" height="4" viewBox="0 0 7 4"><path d="M0.3 0.3 L6.2 0.3 L3.25 3.4 Z" fill="#5f6368"/></svg>
<div class="t" style="top:517.00px;font-size:8.5px;color:#5f6368;letter-spacing:0.75px;left:720.00px;-webkit-text-stroke:0.2px #5f6368;transform:scaleX(0.87);transform-origin:0 0;">AUDIENCE NAME</div>
<div class="r" style="left:720.00px;top:523.00px;width:71.00px;height:1px;background:repeating-linear-gradient(90deg,#80868b 0 2.9px,transparent 2.9px 4.9px);"></div>
<div class="t" style="top:517.00px;font-size:8.5px;color:#5f6368;letter-spacing:0.75px;right:777.50px;-webkit-text-stroke:0.2px #5f6368;transform:scaleX(0.87);transform-origin:100% 0;">ACTIVE USERS</div>
<div class="r" style="left:828.50px;top:523.00px;width:62.00px;height:1px;background:repeating-linear-gradient(90deg,#80868b 0 2.9px,transparent 2.9px 4.9px);"></div>
<div class="r" style="left:720.00px;top:528.00px;width:170.50px;height:1.00px;background:#dadce0;"></div>
<div class="t" style="top:538.00px;font-size:8.9px;color:#202124;left:720.00px;-webkit-text-stroke:0.12px #202124;">All Users</div>
<div class="t" style="top:538.00px;font-size:8.9px;color:#3c4043;right:777.50px;transform:scaleY(1.12);transform-origin:0 100%;">19</div>
<div class="t" style="top:714.00px;font-size:9.75px;color:#1a73e8;right:789.50px;-webkit-text-stroke:0.2px #1a73e8;">View audiences</div>
<svg class="s" style="left:885.60px;top:709.20px" width="9" height="9" viewBox="0 0 9 9"><path d="M0.3 4.5 H7.2" fill="none" stroke="#1a73e8" stroke-width="1.0" stroke-opacity="0.75"/><path d="M4.2 1 L7.6 4.5 L4.2 8" fill="none" stroke="#1a73e8" stroke-width="1.45"/></svg>
<svg class="s" style="left:0;top:0" width="1668" height="764" viewBox="0 0 1668 764"><rect x="200.00" y="271.15" width="65.40" height="1.7" rx="0.6" fill="#1a73e8"/><rect x="373.00" y="271.15" width="145.40" height="1.7" rx="0.6" fill="#1a73e8"/><rect x="546.00" y="271.15" width="74.00" height="1.7" rx="0.6" fill="#1a73e8"/><rect x="718.00" y="271.15" width="104.00" height="1.7" rx="0.6" fill="#1a73e8"/><rect x="200.00" y="292.15" width="31.90" height="1.7" rx="0.6" fill="#1a73e8"/><rect x="373.00" y="292.15" width="81.80" height="1.7" rx="0.6" fill="#1a73e8"/><rect x="546.00" y="292.15" width="25.20" height="1.7" rx="0.6" fill="#1a73e8"/><rect x="200.00" y="314.15" width="23.50" height="1.7" rx="0.6" fill="#1a73e8"/><rect x="373.00" y="314.15" width="45.40" height="1.7" rx="0.6" fill="#1a73e8"/><rect x="546.00" y="314.15" width="18.40" height="1.7" rx="0.6" fill="#1a73e8"/><rect x="200.00" y="335.15" width="23.50" height="1.7" rx="0.6" fill="#1a73e8"/><rect x="373.00" y="335.15" width="45.40" height="1.7" rx="0.6" fill="#1a73e8"/><rect x="546.00" y="335.15" width="22.90" height="1.7" rx="0.6" fill="#1a73e8"/><rect x="200.00" y="356.15" width="13.40" height="1.7" rx="0.6" fill="#1a73e8"/><rect x="373.00" y="356.15" width="63.60" height="1.7" rx="0.6" fill="#1a73e8"/><rect x="546.00" y="356.15" width="13.20" height="1.7" rx="0.6" fill="#1a73e8"/><rect x="718.00" y="356.15" width="173.00" height="1.7" rx="0.6" fill="#1a73e8"/><rect x="200.00" y="378.15" width="8.40" height="1.7" rx="0.6" fill="#1a73e8"/><rect x="373.00" y="378.15" width="27.30" height="1.7" rx="0.6" fill="#1a73e8"/><rect x="546.00" y="378.15" width="7.50" height="1.7" rx="0.6" fill="#1a73e8"/><rect x="200.00" y="399.15" width="6.70" height="1.7" rx="0.6" fill="#1a73e8"/><rect x="373.00" y="399.15" width="36.40" height="1.7" rx="0.6" fill="#1a73e8"/><rect x="546.00" y="399.15" width="7.50" height="1.7" rx="0.6" fill="#1a73e8"/><rect x="718.00" y="399.15" width="104.00" height="1.7" rx="0.6" fill="#1a73e8"/><rect x="934.00" y="271.15" width="98.42" height="1.7" rx="0.6" fill="#1a73e8"/><rect x="934.00" y="292.15" width="35.79" height="1.7" rx="0.6" fill="#1a73e8"/><rect x="934.00" y="314.15" width="26.84" height="1.7" rx="0.6" fill="#1a73e8"/><rect x="934.00" y="335.15" width="8.95" height="1.7" rx="0.6" fill="#1a73e8"/><rect x="1147.00" y="271.15" width="96.33" height="1.7" rx="0.6" fill="#1a73e8"/><rect x="1147.00" y="292.15" width="28.33" height="1.7" rx="0.6" fill="#1a73e8"/><rect x="1147.00" y="314.15" width="22.67" height="1.7" rx="0.6" fill="#1a73e8"/><rect x="1147.00" y="335.15" width="17.00" height="1.7" rx="0.6" fill="#1a73e8"/><rect x="1147.00" y="356.15" width="5.67" height="1.7" rx="0.6" fill="#1a73e8"/><rect x="507.00" y="548.15" width="26.76" height="1.7" rx="0.6" fill="#1a73e8"/><rect x="507.00" y="570.15" width="26.76" height="1.7" rx="0.6" fill="#1a73e8"/><rect x="507.00" y="591.15" width="17.84" height="1.7" rx="0.6" fill="#1a73e8"/><rect x="507.00" y="612.15" width="17.84" height="1.7" rx="0.6" fill="#1a73e8"/><rect x="507.00" y="634.15" width="17.84" height="1.7" rx="0.6" fill="#1a73e8"/><rect x="507.00" y="655.15" width="8.92" height="1.7" rx="0.6" fill="#1a73e8"/><rect x="507.00" y="676.15" width="8.92" height="1.7" rx="0.6" fill="#1a73e8"/><rect x="720.00" y="548.15" width="170.50" height="1.7" rx="0.6" fill="#1a73e8"/></svg>
</body></html>
